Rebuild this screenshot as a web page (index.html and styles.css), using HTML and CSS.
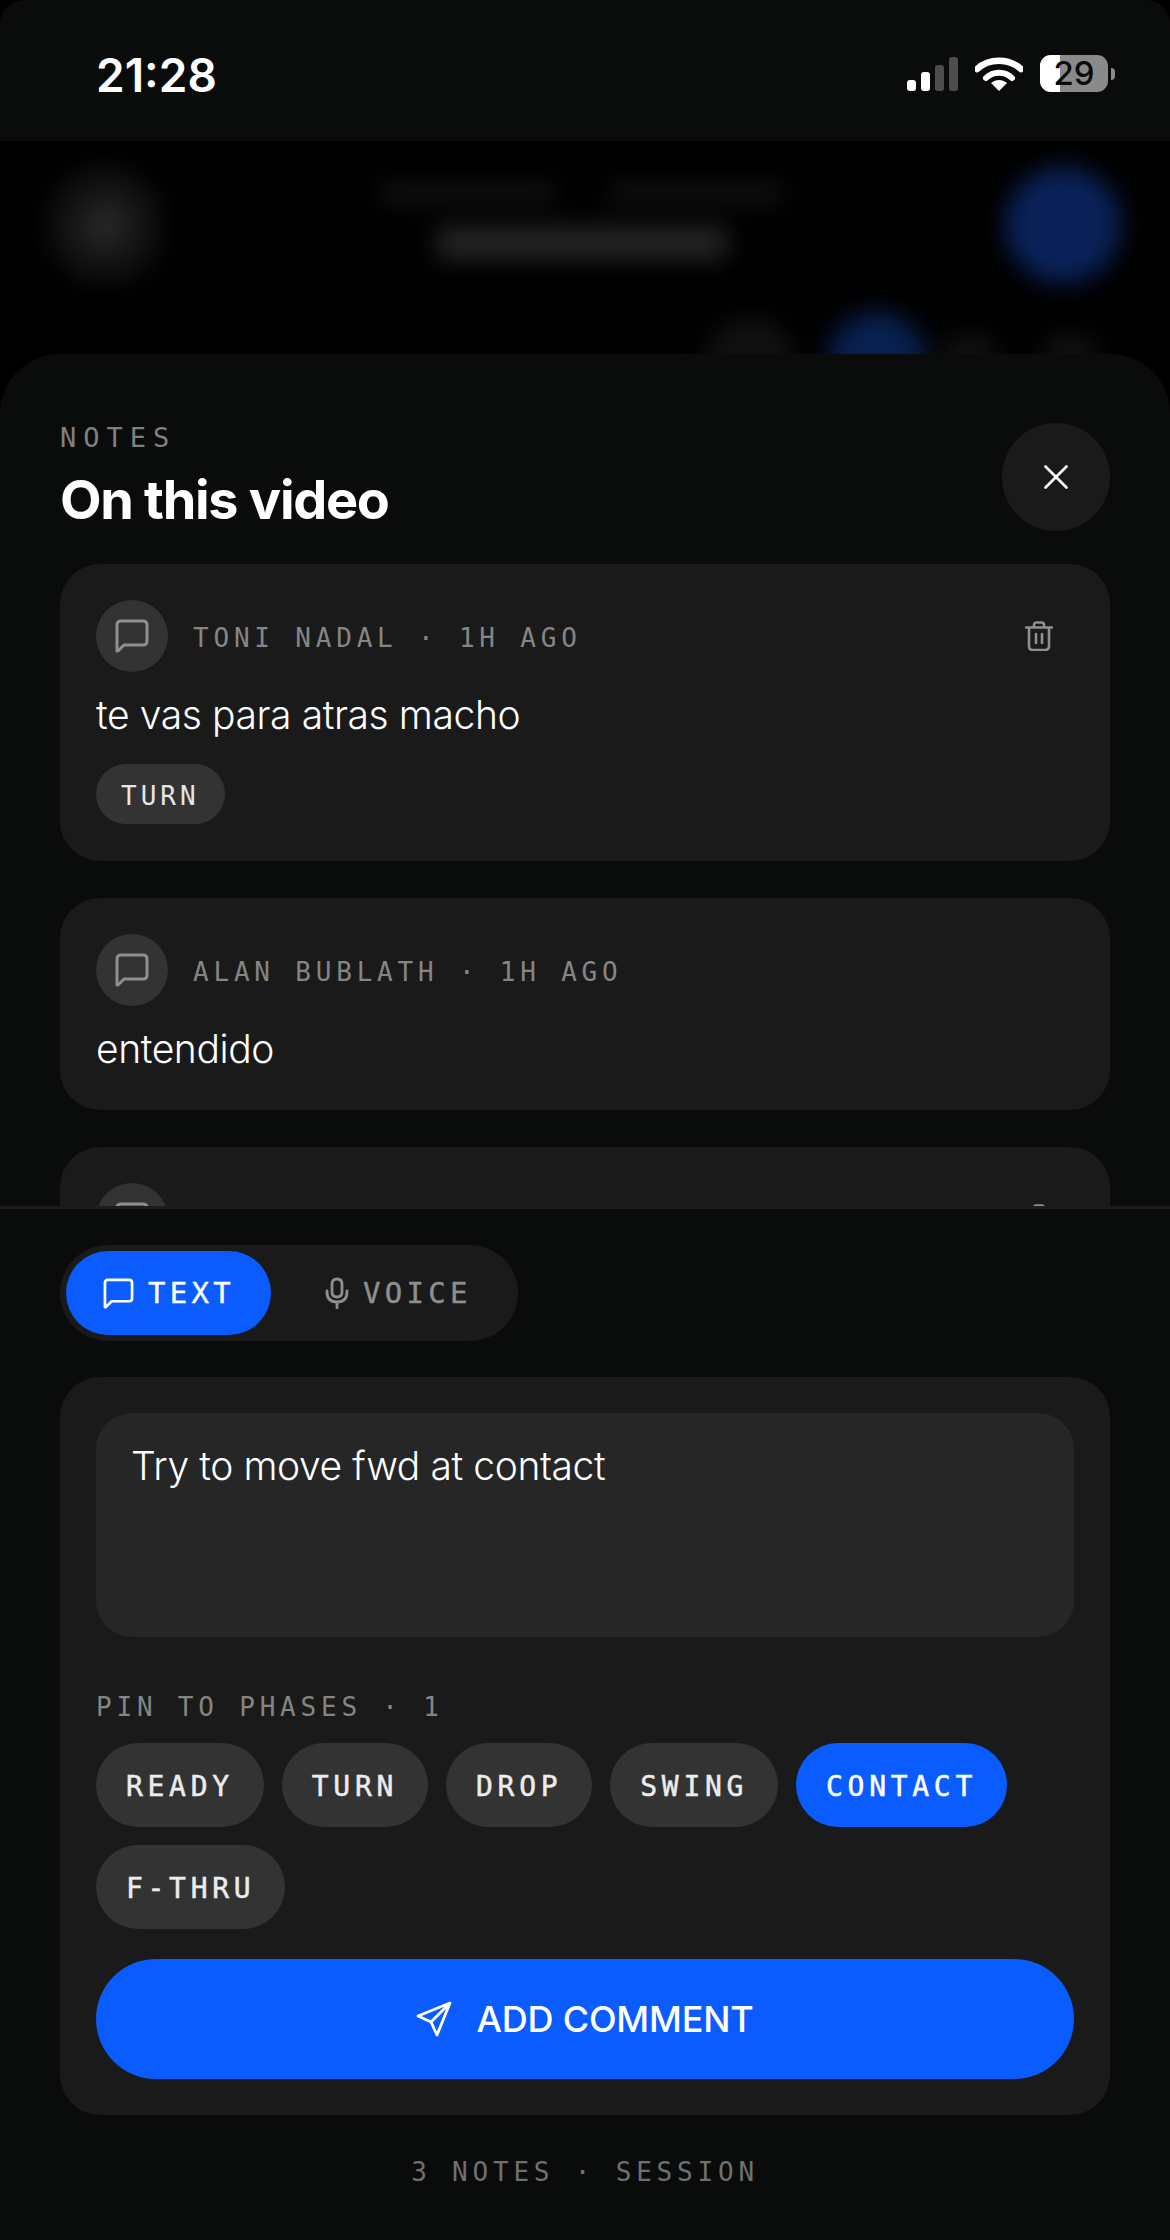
FILE: index.html
```html
<!DOCTYPE html>
<html lang="en">
<head>
    <meta charset="UTF-8">
    <meta name="viewport" content="width=device-width, initial-scale=1.0">
    <title>Notes</title>
    <link rel="stylesheet" href="styles.css">
</head>
<body>
<div class="phone">
    <div class="statusbar">
        <span class="time">21:28</span>
        <div class="status-icons">
            <svg class="signal" viewBox="0 0 51 34" width="51" height="34">
                <rect x="0" y="23" width="9" height="11" rx="3" fill="#fff"/>
                <rect x="14" y="15" width="9" height="19" rx="3" fill="#fff"/>
                <rect x="28" y="8" width="9" height="26" rx="3" fill="#4d4d4d"/>
                <rect x="42" y="0" width="9" height="34" rx="3" fill="#4d4d4d"/>
            </svg>
            <svg class="wifi" viewBox="0 0 48 34" width="48" height="34">
                <path d="M2 12 C14 1 34 1 46 12" fill="none" stroke="#fff" stroke-width="6.5" stroke-linecap="round"/>
                <path d="M11 21 C18 14 30 14 37 21" fill="none" stroke="#fff" stroke-width="6" stroke-linecap="round"/>
                <path d="M24 34 L16 26 C21 22 27 22 32 26 Z" fill="#fff"/>
            </svg>
            <div class="battery">
                <div class="battery-body"><div class="battery-fill"></div><span class="battery-num">29</span></div>
                <div class="battery-nub"></div>
            </div>
        </div>
    </div>

    <div class="backdrop">
        <div class="backdrop-inner">
            <div class="backdrop-top">
                <div class="bd-dot"></div>
                <div class="bd-title">
                    <div class="bd-labels"><span class="bd-bar"></span><span class="bd-bar"></span></div>
                    <div class="bd-heading"></div>
                </div>
                <div class="bd-record"></div>
            </div>
            <div class="backdrop-row">
                <span class="bd-small"></span>
                <span class="bd-small bd-blue"></span>
                <span class="bd-tiny"></span>
                <span class="bd-tiny bd-last"></span>
            </div>
        </div>
    </div>

    <div class="sheet">
        <div class="notes-scroll">
            <div class="sheet-head">
                <div>
                    <div class="eyebrow">NOTES</div>
                    <h1 class="title">On this video</h1>
                </div>
                <button class="close">
                    <svg viewBox="0 0 24 24" width="24" height="24"><path d="M1.5 1.5 L22.5 22.5 M22.5 1.5 L1.5 22.5" stroke="#fff" stroke-width="2.6" stroke-linecap="round"/></svg>
                </button>
            </div>

            <div class="note">
                <div class="note-head">
                    <div class="avatar">
                        <svg viewBox="0 0 34 34" width="34" height="34"><path d="M2 32 V6 Q2 2 6 2 H28 Q32 2 32 6 V22 Q32 26 28 26 H9 L3 32 Z" fill="none" stroke="#8f8f8f" stroke-width="3" stroke-linejoin="round"/></svg>
                    </div>
                    <span class="meta">TONI NADAL · 1H AGO</span>
                    <svg class="trash" viewBox="0 0 28 30" width="28" height="30">
                        <path d="M1 6.5 H27 M9 6.5 V4 Q9 1.500 11.500 1.500 H16.500 Q19 1.500 19 4 V6.500 M4 6.500 V25 Q4 29 8 29 H20 Q24 29 24 25 V6.500 M11 13 V22 M17 13 V22" fill="none" stroke="#8f8f8f" stroke-width="2.6" stroke-linecap="round"/>
                    </svg>
                </div>
                <p class="note-text">te vas para atras macho</p>
                <span class="tag">TURN</span>
            </div>

            <div class="note">
                <div class="note-head">
                    <div class="avatar">
                        <svg viewBox="0 0 34 34" width="34" height="34"><path d="M2 32 V6 Q2 2 6 2 H28 Q32 2 32 6 V22 Q32 26 28 26 H9 L3 32 Z" fill="none" stroke="#8f8f8f" stroke-width="3" stroke-linejoin="round"/></svg>
                    </div>
                    <span class="meta">ALAN BUBLATH · 1H AGO</span>
                </div>
                <p class="note-text">entendido</p>
            </div>

            <div class="note">
                <div class="note-head">
                    <div class="avatar">
                        <svg viewBox="0 0 34 34" width="34" height="34"><path d="M2 32 V6 Q2 2 6 2 H28 Q32 2 32 6 V22 Q32 26 28 26 H9 L3 32 Z" fill="none" stroke="#8f8f8f" stroke-width="3" stroke-linejoin="round"/></svg>
                    </div>
                    <svg class="trash" viewBox="0 0 28 30" width="28" height="30">
                        <path d="M1 6.5 H27 M9 6.5 V4 Q9 1.500 11.500 1.500 H16.500 Q19 1.500 19 4 V6.500 M4 6.500 V25 Q4 29 8 29 H20 Q24 29 24 25 V6.500 M11 13 V22 M17 13 V22" fill="none" stroke="#8f8f8f" stroke-width="2.6" stroke-linecap="round"/>
                    </svg>
                </div>
            </div>
        </div>

        <div class="composer">
            <div class="toggle">
                <div class="toggle-btn active">
                    <svg viewBox="0 0 32 32" width="31" height="31"><path d="M2 30 V5 Q2 2 5 2 H27 Q30 2 30 5 V21 Q30 24 27 24 H9 L3 30 Z" fill="none" stroke="#fff" stroke-width="2.8" stroke-linejoin="round"/></svg>
                    <span>TEXT</span>
                </div>
                <div class="toggle-btn voice">
                    <svg viewBox="0 0 24 32" width="24" height="32"><path d="M12 2 Q17 2 17 7 V15 Q17 20 12 20 Q7 20 7 15 V7 Q7 2 12 2 Z M2 14 V15 Q2 25 12 25 Q22 25 22 15 V14 M12 25 V31" fill="none" stroke="#8f8f8f" stroke-width="2.8" stroke-linecap="round"/></svg>
                    <span>VOICE</span>
                </div>
            </div>

            <div class="form-card">
                <div class="input-box">Try to move fwd at contact</div>
                <div class="pin-label">PIN TO PHASES · 1</div>
                <div class="phases">
                    <span class="phase">READY</span>
                    <span class="phase">TURN</span>
                    <span class="phase">DROP</span>
                    <span class="phase">SWING</span>
                    <span class="phase on">CONTACT</span>
                    <span class="phase">F-THRU</span>
                </div>
                <button class="add">
                    <svg viewBox="0 0 36 36" width="36" height="36"><path d="M34 2 L2 15 L15 21 L21 34 Z M34 2 L15 21" fill="none" stroke="#fff" stroke-width="2.8" stroke-linejoin="round" stroke-linecap="round"/></svg>
                    <span>ADD COMMENT</span>
                </button>
            </div>

            <div class="footer-note">3 NOTES · SESSION</div>
        </div>
    </div>
</div>
</body>
</html>
```
FILE: styles.css
```css
*{
    box-sizing: border-box;
}
html,body{
    margin: 0;
    padding: 0;
    background: #000;
}
.phone{
    width: 1170px;
    height: 2240px;
    background: #000;
    border-radius: 24px 24px 0 0;
    overflow: hidden;
    display: flex;
    flex-direction: column;
    font-family: "Inter", "Liberation Sans", sans-serif;
    color: #fff;
}

/* status bar */
.statusbar{
    height: 141px;
    flex: none;
    background: #0a0c0c;
    display: flex;
    align-items: flex-start;
    justify-content: space-between;
    padding: 55px 55px 0 96px;
}
.time{
    font-size: 46px;
    font-weight: 600;
    line-height: 40px;
}
.status-icons{
    display: flex;
    align-items: center;
    gap: 17px;
}
.battery{
    display: flex;
    align-items: center;
    gap: 3px;
}
.battery-body{
    position: relative;
    width: 68px;
    height: 37px;
    border-radius: 11px;
    background: #8a8a8a;
}
.battery-fill{
    width: 20px;
    height: 100%;
    border-radius: 11px 0 0 11px;
    background: #fff;
}
.battery-num{
    position: absolute;
    inset: 0;
    text-align: center;
    color: #0a0c0c;
    font-size: 33px;
    font-weight: 500;
    line-height: 37px;
}
.battery-nub{
    width: 4px;
    height: 12px;
    border-radius: 0 6px 6px 0;
    background: #8a8a8a;
}

/* blurred page behind the sheet */
.backdrop{
    height: 213px;
    flex: none;
    background: #000;
    overflow: hidden;
}
.backdrop-inner{
    filter: blur(12px);
}
.backdrop-top{
    display: flex;
    justify-content: space-between;
    align-items: flex-start;
    padding: 26px 49px 0 45px;
}
.bd-dot{
    width: 120px;
    height: 120px;
    margin-top: -2px;
    border-radius: 50%;
    background: radial-gradient(circle, #343434 0, #181818 30%, #0f0f0f 60%, transparent 85%);
}
.bd-title{
    display: flex;
    flex-direction: column;
    align-items: center;
    gap: 25px;
    margin-top: 17px;
    margin-right: 6px;
}
.bd-labels{
    display: flex;
    gap: 55px;
}
.bd-bar{
    width: 175px;
    height: 18px;
    background: #141414;
}
.bd-heading{
    width: 290px;
    height: 32px;
    background: #262626;
}
.bd-record{
    width: 116px;
    height: 116px;
    border-radius: 50%;
    background: #0a2259;
}
.backdrop-row{
    display: flex;
    justify-content: flex-end;
    align-items: center;
    gap: 32px;
    padding: 27px 70px 0 0;
}
.bd-small{
    width: 90px;
    height: 90px;
    border-radius: 50%;
    background: #101010;
}
.bd-blue{
    width: 100px;
    height: 100px;
    background: #08204f;
}
.bd-tiny{
    width: 60px;
    height: 60px;
    margin-left: -19px;
    border-radius: 50%;
    background: #101010;
}
.bd-last{
    margin-left: 8px;
}

/* sheet */
.sheet{
    flex: 1;
    min-height: 0;
    background: #0a0c0c;
    border-radius: 60px 60px 0 0;
    display: flex;
    flex-direction: column;
    position: relative;
}
.notes-scroll{
    height: 855px;
    flex: none;
    overflow: hidden;
    padding: 69px 60px 0 60px;
    border-bottom: 3px solid #1c1c1c;
}
.sheet-head{
    display: flex;
    justify-content: space-between;
    align-items: flex-start;
    margin-bottom: 32px;
}
.eyebrow{
    font-family: "DejaVu Sans Mono", "Liberation Mono", monospace;
    font-size: 27px;
    letter-spacing: 7px;
    line-height: 30px;
    color: #808080;
}
.title{
    margin: 15px 0 0 0;
    font-size: 54px;
    font-weight: 700;
    letter-spacing: -1.3px;
    line-height: 64px;
}
.close{
    width: 108px;
    height: 108px;
    border: none;
    border-radius: 50%;
    background: #1a1a1a;
    display: flex;
    align-items: center;
    justify-content: center;
}
.note{
    background: #1a1a1a;
    border-radius: 40px;
    padding: 36px 36px 37px 36px;
    margin-bottom: 37px;
}
.note-head{
    display: flex;
    align-items: center;
    gap: 25px;
}
.avatar{
    width: 72px;
    height: 72px;
    flex: none;
    border-radius: 50%;
    background: #333;
    display: flex;
    align-items: center;
    justify-content: center;
}
.meta{
    padding-top: 3px;
    font-family: "DejaVu Sans Mono", "Liberation Mono", monospace;
    font-size: 26px;
    letter-spacing: 4.8px;
    color: #858585;
}
.trash{
    margin-left: auto;
    margin-right: 21px;
}
.note-text{
    margin: 19px 0 0 0;
    font-size: 39px;
    line-height: 48px;
    font-weight: 300;
    letter-spacing: -0.4px;
}
.tag{
    display: block;
    width: max-content;
    margin-top: 25px;
    height: 60px;
    line-height: 60px;
    padding: 2px 25px 0 25px;
    border-radius: 30px;
    background: #333;
    font-family: "DejaVu Sans Mono", "Liberation Mono", monospace;
    font-size: 26px;
    letter-spacing: 4px;
    color: #e6e6e6;
}

/* composer */
.composer{
    flex: 1;
    padding: 36px 60px 0 60px;
}
.toggle{
    display: flex;
    width: max-content;
    align-items: center;
    height: 96px;
    padding: 6px;
    border-radius: 48px;
    background: #1a1a1a;
    font-family: "DejaVu Sans Mono", "Liberation Mono", monospace;
    font-size: 29px;
    letter-spacing: 4.3px;
    color: #8f8f8f;
    -webkit-text-stroke: 0.4px;
}
.toggle-btn{
    height: 84px;
    display: flex;
    align-items: center;
    gap: 14px;
    padding: 0 36px 0 37px;
    border-radius: 42px;
}
.toggle-btn.active{
    background: #0a5cff;
    color: #fff;
}
.toggle-btn.voice{
    padding: 0 40px 0 54px;
}
.form-card{
    margin-top: 36px;
    background: #1a1a1a;
    border-radius: 40px;
    padding: 36px;
}
.input-box{
    height: 224px;
    border-radius: 36px;
    background: #262626;
    padding: 30px 35px;
    font-size: 39px;
    line-height: 46px;
    font-weight: 300;
    letter-spacing: -0.4px;
}
.pin-label{
    margin-top: 55px;
    font-family: "DejaVu Sans Mono", "Liberation Mono", monospace;
    font-size: 26px;
    letter-spacing: 4.8px;
    line-height: 30px;
    color: #858585;
}
.phases{
    margin-top: 21px;
    display: flex;
    flex-wrap: wrap;
    gap: 18px;
}
.phase{
    height: 84px;
    line-height: 84px;
    padding: 2px 30px 0 30px;
    border-radius: 42px;
    background: #333;
    font-family: "DejaVu Sans Mono", "Liberation Mono", monospace;
    font-size: 28px;
    letter-spacing: 4.7px;
    -webkit-text-stroke: 0.5px;
    color: #ececec;
}
.phase.on{
    background: #0a5cff;
    color: #fff;
}
.add{
    width: 100%;
    height: 120px;
    margin-top: 30px;
    border: none;
    border-radius: 60px;
    background: #0a5cff;
    color: #fff;
    font-family: "Inter", "Liberation Sans", sans-serif;
    font-size: 36px;
    font-weight: 500;
    letter-spacing: -0.2px;
    display: flex;
    align-items: center;
    justify-content: center;
    gap: 24px;
}
.footer-note{
    margin-top: 42px;
    text-align: center;
    font-family: "DejaVu Sans Mono", "Liberation Mono", monospace;
    font-size: 26px;
    letter-spacing: 4.8px;
    color: #707070;
}
```
